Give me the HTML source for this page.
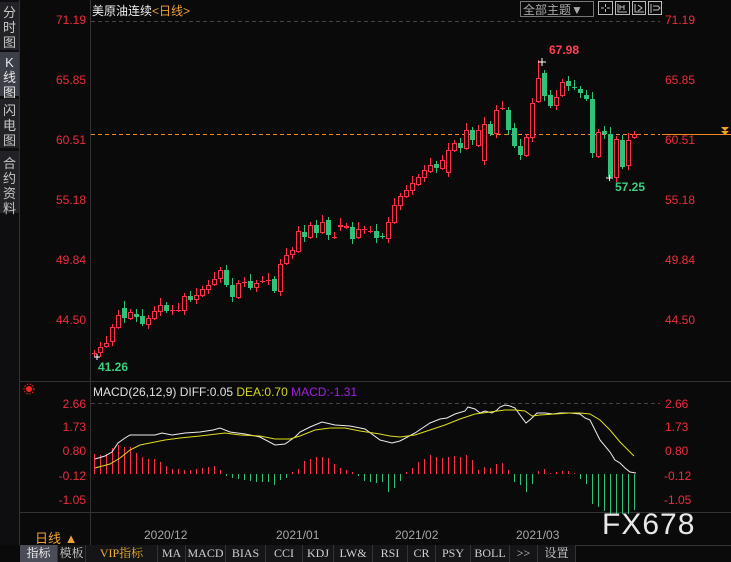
<!DOCTYPE html>
<html><head><meta charset="utf-8">
<style>
*{margin:0;padding:0;box-sizing:border-box}
body{width:731px;height:562px;background:#0a0a0a;overflow:hidden;position:relative;font-family:"Liberation Sans","Noto Sans CJK SC",sans-serif}
.a{position:absolute;white-space:nowrap}
.side{position:absolute;left:0;top:0;width:20px;height:545px;background:#0e0e10;border-right:1px solid #333}
.tab{position:absolute;left:0;width:19px;color:#c8c8c8;font-size:13px;line-height:15px;text-align:center;background:#222226}
.tab.sel{background:#3c3e48;color:#e8e8e8}
.lab{font-size:12px;color:#f02c3c}
.bb{position:absolute;top:545px;height:17px;font-size:12px;color:#d0d0d0;text-align:center;line-height:17px;border-right:1px solid #333;background:#151517;font-family:"Liberation Serif","Noto Serif CJK SC",serif}
</style></head><body>
<div class="side">
<div class="tab" style="top:2px;height:48px;padding-top:3px">分<br>时<br>图</div>
<div class="tab sel" style="top:52px;height:44px;padding-top:3px">K<br>线<br>图</div>
<div class="tab" style="top:99px;height:49px;padding-top:4px">闪<br>电<br>图</div>
<div class="tab" style="top:151px;height:62px;padding-top:5px">合<br>约<br>资<br>料</div>
</div>
<svg class="a" style="left:0;top:0" width="731" height="562" id="sv">
<line x1="90.5" y1="0" x2="90.5" y2="545" stroke="#333"/>
<line x1="20" y1="381.5" x2="731" y2="381.5" stroke="#333"/>
<line x1="20" y1="512.5" x2="731" y2="512.5" stroke="#333"/>
<line x1="20" y1="545.5" x2="731" y2="545.5" stroke="#333"/>
<line x1="91" y1="21.5" x2="660" y2="21.5" stroke="#444" stroke-dasharray="4,3"/>
<line x1="91" y1="403.5" x2="660" y2="403.5" stroke="#444" stroke-dasharray="4,3"/>
<line x1="91" y1="134.5" x2="660" y2="134.5" stroke="#f08a20" stroke-dasharray="4,3"/>
<line x1="662" y1="134.5" x2="731" y2="134.5" stroke="#f08a20"/>
<path d="M721 127h8l-4 4zM721 131h8l-4 4z" fill="#f0a020"/>
<g id="g"></g>
<circle cx="29" cy="389" r="3" fill="#f22"/><circle cx="29" cy="389" r="5" fill="none" stroke="#f22" stroke-dasharray="1.5,1.5"/>
<rect x="520.5" y="1.5" width="73" height="15" fill="none" stroke="#777"/>
<g fill="none" stroke="#bbb"><rect x="598.5" y="1.5" width="14" height="13"/><rect x="615.5" y="1.5" width="14" height="13"/><rect x="632.5" y="1.5" width="13" height="13"/><rect x="648.5" y="1.5" width="13" height="13"/>
<path d="M605.5 4v3M605.5 9v3M601 8h3M607 8h3M618 4v8h9M620 5v5M624 5v5M620 7h4M635 4v8h9M638 5l4 3-4 3M651 4v9M653 6h5l2 2-2 2h-5"/></g>
</svg>
<div class="a" style="left:92px;top:2px;font-size:12px;color:#f0f0f0">美原油连续<span style="color:#f0a030">&lt;日线&gt;</span></div>
<div class="a" style="left:523px;top:1px;font-size:12px;color:#aaa">全部主题▼</div>
<div class="a lab" style="left:40px;top:13px;width:46px;text-align:right">71.19</div>
<div class="a lab" style="left:40px;top:73px;width:46px;text-align:right">65.85</div>
<div class="a lab" style="left:40px;top:133px;width:46px;text-align:right">60.51</div>
<div class="a lab" style="left:40px;top:193px;width:46px;text-align:right">55.18</div>
<div class="a lab" style="left:40px;top:253px;width:46px;text-align:right">49.84</div>
<div class="a lab" style="left:40px;top:313px;width:46px;text-align:right">44.50</div>
<div class="a lab" style="left:665px;top:13px">71.19</div>
<div class="a lab" style="left:665px;top:73px">65.85</div>
<div class="a lab" style="left:665px;top:133px">60.51</div>
<div class="a lab" style="left:665px;top:193px">55.18</div>
<div class="a lab" style="left:665px;top:253px">49.84</div>
<div class="a lab" style="left:665px;top:313px">44.50</div>
<div class="a lab" style="left:40px;top:397px;width:46px;text-align:right">2.66</div>
<div class="a lab" style="left:40px;top:420px;width:46px;text-align:right">1.73</div>
<div class="a lab" style="left:40px;top:444px;width:46px;text-align:right">0.80</div>
<div class="a lab" style="left:40px;top:469px;width:46px;text-align:right">-0.12</div>
<div class="a lab" style="left:40px;top:493px;width:46px;text-align:right">-1.05</div>
<div class="a lab" style="left:665px;top:397px">2.66</div>
<div class="a lab" style="left:665px;top:420px">1.73</div>
<div class="a lab" style="left:665px;top:444px">0.80</div>
<div class="a lab" style="left:664px;top:469px">-0.12</div>
<div class="a lab" style="left:664px;top:493px">-1.05</div>
<div class="a" style="left:549px;top:43px;font-size:12px;color:#ff4050;font-weight:bold">67.98</div>
<div class="a" style="left:615px;top:180px;font-size:12px;color:#3ccf80;font-weight:bold">57.25</div>
<div class="a" style="left:98px;top:360px;font-size:12px;color:#3ccf80;font-weight:bold">41.26</div>
<div class="a" style="left:93px;top:385px;font-size:12px;color:#e0e0e0">MACD(26,12,9) DIFF:0.05 <span style="color:#d8d820">DEA:0.70</span> <span style="color:#a020e0">MACD:-1.31</span></div>
<div class="a" style="left:35px;top:528px;font-size:13px;color:#f0a030">日线 ▲</div>
<div class="a" style="left:144px;top:528px;font-size:12px;color:#a8a8a8">2020/12</div>
<div class="a" style="left:276px;top:528px;font-size:12px;color:#a8a8a8">2021/01</div>
<div class="a" style="left:395px;top:528px;font-size:12px;color:#a8a8a8">2021/02</div>
<div class="a" style="left:516px;top:528px;font-size:12px;color:#a8a8a8">2021/03</div>
<div class="a" style="left:602px;top:508px;font-size:30px;color:#e8e8e8;letter-spacing:1px">FX678</div>
<div class="bb" style="left:20px;width:38px;background:#4a4d58;color:#fff">指标</div>
<div class="bb" style="left:58px;width:28px">模板</div>
<div class="bb" style="left:86px;width:72px;color:#f0b030">VIP指标</div>
<div class="bb" style="left:158px;width:28px">MA</div>
<div class="bb" style="left:186px;width:40px">MACD</div>
<div class="bb" style="left:226px;width:40px">BIAS</div>
<div class="bb" style="left:266px;width:37px">CCI</div>
<div class="bb" style="left:303px;width:31px">KDJ</div>
<div class="bb" style="left:334px;width:39px">LW&amp;</div>
<div class="bb" style="left:373px;width:35px">RSI</div>
<div class="bb" style="left:408px;width:28px">CR</div>
<div class="bb" style="left:436px;width:35px">PSY</div>
<div class="bb" style="left:471px;width:39px">BOLL</div>
<div class="bb" style="left:510px;width:28px">&gt;&gt;</div>
<div class="bb" style="left:538px;width:38px">设置</div>
<script>
var C=[[353,353],[352,347],[346,343],[341,327],[327,315],[308,318],[318,312],[314,317],[316,324],[324,318],[318,311],[311,305],[305,311],[310,310],[310,310],[310,296],[296,300],[299,295],[295,289],[289,285],[284,279],[278,270],[270,285],[285,297],[297,283],[282,282],[281,288],[287,283],[281,281],[280,280],[279,291],[291,264],[263,255],[254,250],[251,231],[232,237],[237,225],[225,233],[232,222],[220,235],[237,237],[226,225],[227,226],[227,239],[237,229],[229,229],[231,231],[231,238],[236,237],[238,222],[222,205],
[205,196],[196,190],[190,183],[184,177],[177,170],[171,165],[164,168],[168,160],[172,150],[150,143],[143,148],[148,130],[130,140],[145,130],
[160,124],[124,134],[133,110],[108,108],[110,130],[128,146],[146,155],[155,137],[137,103],[101,78],[73,96],[95,106],[105,97],[95,82],[81,86],[87,88],[89,93],[95,99],[99,153],[156,132],[131,134],[134,177],[177,139],[140,167],[165,140],[137,134]];
var H=[20,19,20,26,29,27,27,21,17,15,15,12,8,5,5,4,4,5,6,7,8,4,-2,-4,-5,-6,-7,-8,-8,-8,-11,-6,-4,2,5,13,15,17,17,16,10,6,4,2,-2,-7,-8,-9,-8,-18,-14,-7,2,6,12,15,19,17,16,17,18,17,19,14,4,7,6,10,11,4,-8,-11,-18,-10,3,5,1,2,3,3,1,-5,-10,-30,-33,-37,-40,-40,-40,-40,-36];
var s='',R='#ff3048',G='#2fc27a';
for(var i=0;i<C.length;i++){var x=94+i*6,o=C[i][0],c=C[i][1],up=c<=o,col=up?R:G,t=Math.min(o,c),b=Math.max(o,c);
var hi=t-3-(i%3)*2,lo=b+2+(i%2)*3;if(i==74)hi=60;if(i==86)lo=178;if(i==0)lo=357;
s+='<line x1="'+(x+.5)+'" y1="'+hi+'" x2="'+(x+.5)+'" y2="'+lo+'" stroke="'+col+'"/>';
if(b-t<1){s+='<line x1="'+(x-2)+'" y1="'+(t+.5)+'" x2="'+(x+3)+'" y2="'+(t+.5)+'" stroke="'+col+'"/>';}
else if(up){s+='<rect x="'+(x-1.5)+'" y="'+(t+.5)+'" width="4" height="'+(b-t)+'" fill="#0a0a0a" stroke="'+R+'"/>';}
else{s+='<rect x="'+(x-2)+'" y="'+t+'" width="5" height="'+(b-t)+'" fill="'+G+'"/>';}
var h=H[i];s+='<line x1="'+(x+.5)+'" y1="474" x2="'+(x+.5)+'" y2="'+(474-h)+'" stroke="'+(h>=0?R:G)+'"/>';}
s+='<path d="M542 58v8M538 62h8M94 357h6M97 354v6M606 178h7M609.5 175v6" stroke="#fff"/>';
s+='<polyline fill="none" stroke="#eee" points="95,459 105,456 112,452 118,443 125,438 130,435 140,435 155,435 162,433 172,435 185,433 200,432 213,430 220,428 230,432 245,434 260,437 275,445 285,444 295,437 300,432 310,427 322,422 335,425 350,426 365,429 380,440 392,443 400,441 415,433 430,423 440,419 447,418 455,414 465,411 468,407 475,409 480,413 485,411 492,413 497,410 500,407 505,405 510,406 515,408 520,415 526,423 532,418 537,413 545,413 553,414 560,413 570,413 580,414 585,418 590,420 595,430 600,440 610,452 615,460 620,463 625,468 630,472 636,473"/>';
s+='<polyline fill="none" stroke="#dede20" points="95,468 110,464 120,458 130,450 140,445 150,443 165,440 180,438 200,436 225,433 240,435 260,436 275,439 290,439 300,436 315,430 330,428 345,428 360,431 380,434 390,436 400,437 415,435 430,430 445,425 460,419 475,414 490,412 505,410 515,410 525,411 532,416 540,415 555,414 570,413 580,413 590,414 600,420 610,430 620,442 628,450 634,456"/>';
document.getElementById('g').innerHTML=s;
</script>
</body></html>
